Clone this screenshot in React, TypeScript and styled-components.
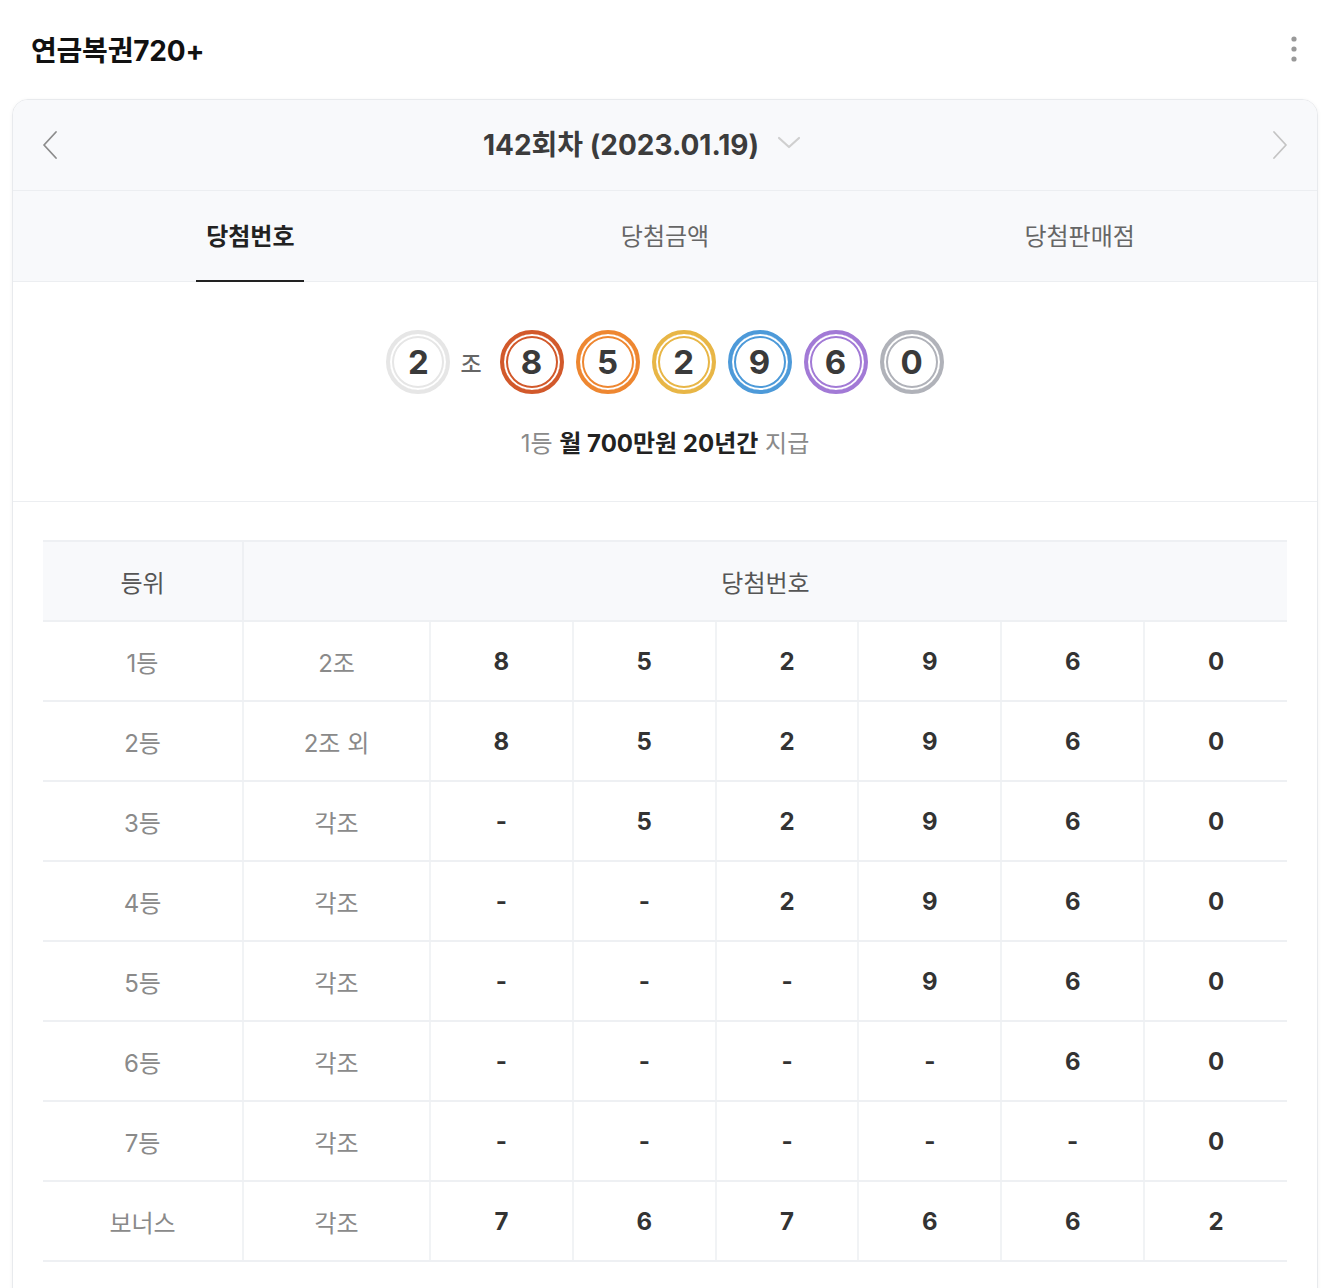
import React from 'react';
import styled, { createGlobalStyle } from 'styled-components';

const GlobalStyle = createGlobalStyle`
  html, body {
    margin: 0;
    padding: 0;
    background: #fff;
    font-family: Inter, "Noto Sans CJK KR", sans-serif;
    color: #222;
  }
`;

const Page = styled.div`
  padding: 0 12px 40px;
`;

const TopBar = styled.div`
  display: flex;
  align-items: center;
  justify-content: space-between;
  height: 99px;
  padding: 0 20px 2px 19px;
  box-sizing: border-box;
`;

const Title = styled.h1`
  margin: 0;
  font-size: 28px;
  font-weight: 700;
  letter-spacing: -0.2px;
  color: #111;
`;

const MoreButton = styled.button`
  border: 0;
  background: none;
  padding: 0;
  display: flex;
  cursor: pointer;
`;

const Card = styled.div`
  border: 1px solid #e8eaed;
  border-radius: 16px;
  box-shadow: 0 1px 4px rgba(0, 0, 0, 0.05);
  overflow: hidden;
  background: #fff;
`;

const RoundHeader = styled.div`
  display: flex;
  align-items: center;
  justify-content: space-between;
  height: 90px;
  padding: 0 28px;
  background: #f8f9fb;
  border-bottom: 1px solid #eceef1;
`;

const ArrowButton = styled.button`
  border: 0;
  background: none;
  padding: 0;
  display: flex;
  cursor: pointer;
`;

const RoundTitle = styled.div`
  display: flex;
  align-items: center;
  gap: 18px;
  font-size: 28px;
  font-weight: 700;
  color: #3c3c3c;
  margin-right: 46px;
  margin-bottom: 4px;
`;

const Tabs = styled.div`
  display: grid;
  grid-template-columns: repeat(3, 1fr);
  padding: 0 30px;
  background: #f8f9fb;
  border-bottom: 1px solid #eceef1;
`;

const Tab = styled.div`
  display: flex;
  justify-content: center;
  align-items: stretch;
  height: 90px;
`;

const TabLabel = styled.span<{ $active?: boolean }>`
  display: flex;
  align-items: center;
  padding: 0 10px 2px;
  font-size: 24px;
  font-weight: ${(p) => (p.$active ? 700 : 400)};
  color: ${(p) => (p.$active ? '#222' : '#666')};
  border-bottom: 2px solid ${(p) => (p.$active ? '#222' : 'transparent')};
  margin-bottom: -1px;
`;

const Draw = styled.div`
  display: flex;
  flex-direction: column;
  align-items: center;
  height: 220px;
  padding-top: 48px;
  box-sizing: border-box;
  border-bottom: 1px solid #eceef1;
`;

const Balls = styled.div`
  display: flex;
  align-items: center;
  gap: 12px;
`;

const Ball = styled.div<{ $color: string }>`
  width: 64px;
  height: 64px;
  box-sizing: border-box;
  border-radius: 50%;
  border: 4px solid ${(p) => p.$color};
  box-shadow: inset 0 0 0 2px #fff, inset 0 0 0 4px ${(p) => p.$color};
  display: flex;
  align-items: center;
  justify-content: center;
  font-size: 33px;
  font-weight: 700;
  color: #3a3a3a;
`;

const GroupLabel = styled.span`
  font-size: 23px;
  font-weight: 500;
  color: #666;
  margin: 0 6px 0 -2px;
`;

const Prize = styled.p`
  margin: 30px 0 0;
  font-size: 24px;
  color: #8a8a8a;

  strong {
    font-weight: 700;
    color: #222;
  }
`;

const TableWrap = styled.div`
  padding: 38px 30px 60px;
`;

const Table = styled.table`
  width: 100%;
  border-collapse: collapse;
  table-layout: fixed;
  font-size: 24px;
`;

const Th = styled.th`
  height: 78px;
  padding: 0;
  background: #f8f9fb;
  font-weight: 400;
  color: #555;
  border-top: 2px solid #eef0f3;
  border-bottom: 2px solid #eef0f3;
  & + & {
    border-left: 2px solid #eef0f3;
  }
`;

const Td = styled.td<{ $bold?: boolean }>`
  height: 78px;
  text-align: center;
  padding: 0;
  color: ${(p) => (p.$bold ? '#333' : '#8a8a8a')};
  font-weight: ${(p) => (p.$bold ? 700 : 400)};
  border-bottom: 2px solid #eef0f3;
  & + & {
    border-left: 2px solid #f1f3f5;
  }
`;

const Chevron = ({ dir, color }: { dir: 'left' | 'right'; color: string }) => (
  <svg width="18" height="30" viewBox="0 0 18 30" fill="none">
    <path
      d={dir === 'left' ? 'M15 2 L3 15 L15 28' : 'M3 2 L15 15 L3 28'}
      stroke={color}
      strokeWidth="1.8"
      strokeLinecap="round"
      strokeLinejoin="round"
    />
  </svg>
);

const balls = [
  { n: 8, color: '#d2592b' },
  { n: 5, color: '#ee8731' },
  { n: 2, color: '#e8b646' },
  { n: 9, color: '#4d9ad9' },
  { n: 6, color: '#a27ad6' },
  { n: 0, color: '#b0b2b9' },
];

const rows: [string, string, string[]][] = [
  ['1등', '2조', ['8', '5', '2', '9', '6', '0']],
  ['2등', '2조 외', ['8', '5', '2', '9', '6', '0']],
  ['3등', '각조', ['-', '5', '2', '9', '6', '0']],
  ['4등', '각조', ['-', '-', '2', '9', '6', '0']],
  ['5등', '각조', ['-', '-', '-', '9', '6', '0']],
  ['6등', '각조', ['-', '-', '-', '-', '6', '0']],
  ['7등', '각조', ['-', '-', '-', '-', '-', '0']],
  ['보너스', '각조', ['7', '6', '7', '6', '6', '2']],
];

export default function App() {
  return (
    <Page>
      <GlobalStyle />
      <TopBar>
        <Title>연금복권720+</Title>
        <MoreButton aria-label="더보기">
          <svg width="8" height="30" viewBox="0 0 8 30">
            <circle cx="4" cy="5" r="2.6" fill="#999" />
            <circle cx="4" cy="15" r="2.6" fill="#999" />
            <circle cx="4" cy="25" r="2.6" fill="#999" />
          </svg>
        </MoreButton>
      </TopBar>

      <Card>
        <RoundHeader>
          <ArrowButton aria-label="이전">
            <Chevron dir="left" color="#8c8c8c" />
          </ArrowButton>
          <RoundTitle>
            142회차 (2023.01.19)
            <svg width="24" height="14" viewBox="0 0 24 14" fill="none">
              <path d="M2 2 L12 11 L22 2" stroke="#cfcfcf" strokeWidth="2.2" strokeLinecap="round" strokeLinejoin="round" />
            </svg>
          </RoundTitle>
          <ArrowButton aria-label="다음">
            <Chevron dir="right" color="#c4c4c4" />
          </ArrowButton>
        </RoundHeader>

        <Tabs>
          <Tab>
            <TabLabel $active>당첨번호</TabLabel>
          </Tab>
          <Tab>
            <TabLabel>당첨금액</TabLabel>
          </Tab>
          <Tab>
            <TabLabel>당첨판매점</TabLabel>
          </Tab>
        </Tabs>

        <Draw>
          <Balls>
            <Ball $color="#e6e6e6">2</Ball>
            <GroupLabel>조</GroupLabel>
            {balls.map((b, i) => (
              <Ball key={i} $color={b.color}>
                {b.n}
              </Ball>
            ))}
          </Balls>
          <Prize>
            1등 <strong>월 700만원 20년간</strong> 지급
          </Prize>
        </Draw>

        <TableWrap>
          <Table>
            <colgroup>
              <col style={{ width: 200 }} />
              <col style={{ width: 187 }} />
              <col />
              <col />
              <col />
              <col />
              <col />
              <col />
            </colgroup>
            <thead>
              <tr>
                <Th>등위</Th>
                <Th colSpan={7}>당첨번호</Th>
              </tr>
            </thead>
            <tbody>
              {rows.map(([rank, group, nums]) => (
                <tr key={rank}>
                  <Td>{rank}</Td>
                  <Td>{group}</Td>
                  {nums.map((n, i) => (
                    <Td key={i} $bold>
                      {n}
                    </Td>
                  ))}
                </tr>
              ))}
            </tbody>
          </Table>
        </TableWrap>
      </Card>
    </Page>
  );
}
